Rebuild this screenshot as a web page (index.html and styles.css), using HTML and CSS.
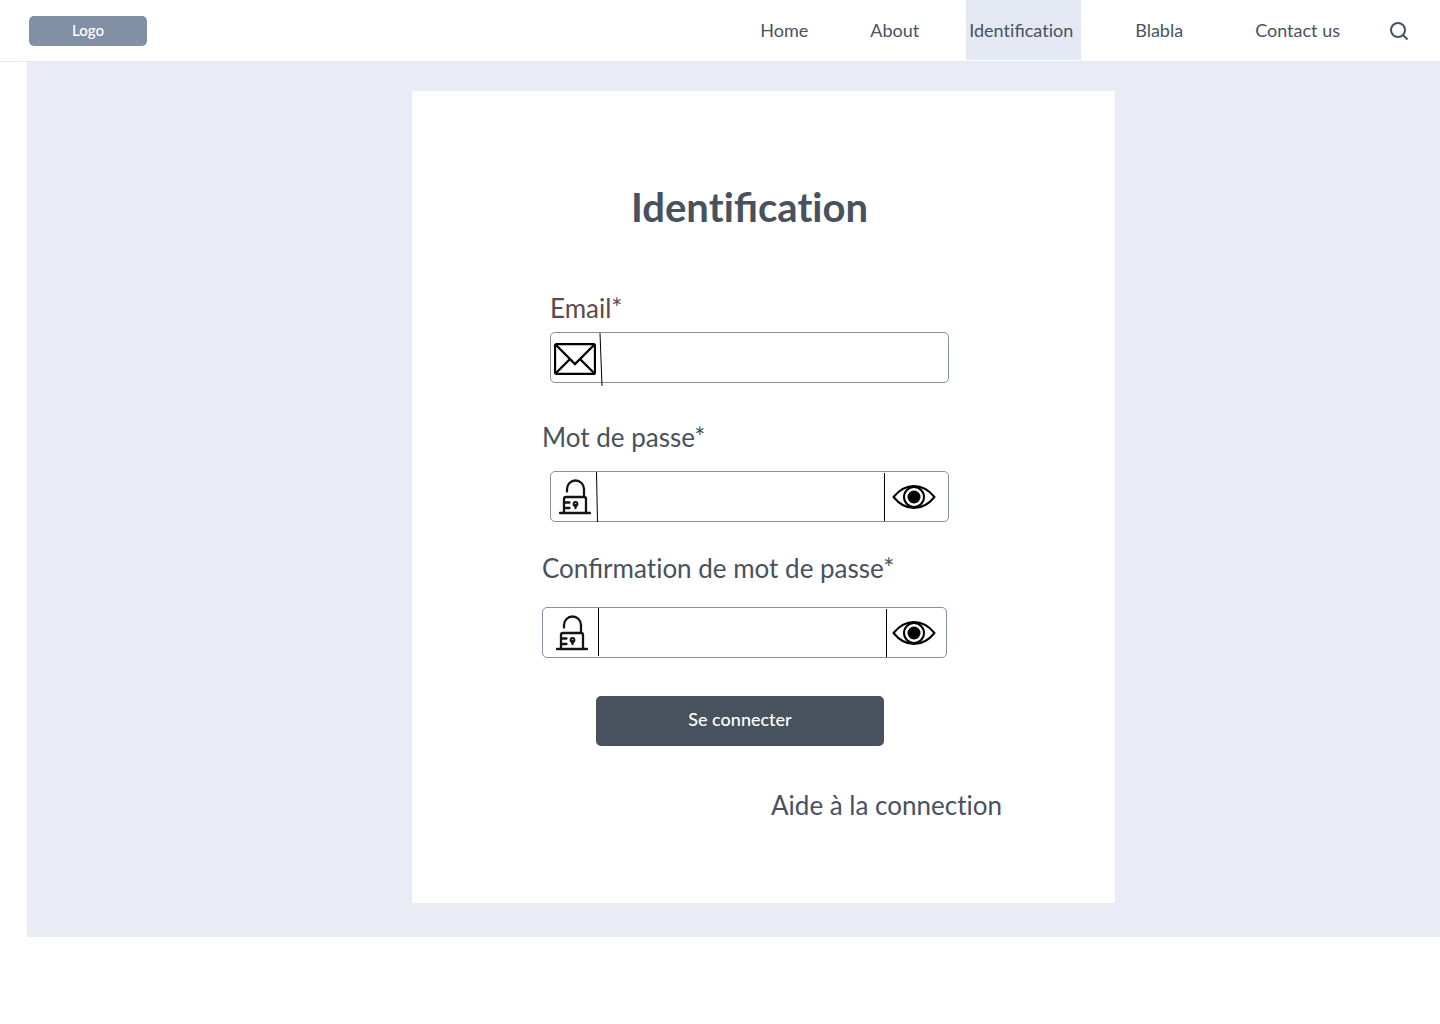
FILE: index.html
```html
<!DOCTYPE html>
<html lang="fr">
<head>
<meta charset="utf-8">
<meta name="viewport" content="width=device-width, initial-scale=1">
<title>Identification</title>
<link rel="stylesheet" href="styles.css">
</head>
<body>
<svg width="0" height="0" class="sprite" aria-hidden="true">
  <symbol id="lock" viewBox="0 0 34 36">
    <g fill="none" stroke="#151313" stroke-width="2.300" stroke-linecap="round" stroke-linejoin="round">
      <path d="M9 12.500V10a8 8 0 0 1 17 0v7"/>
      <path d="M6 33V20q0-2 2-2h18q2 0 2 2v13M2 34h30M7 23.500h4.500M7 29h4.500"/>
      <path d="M17.500 26v3"/>
      <circle cx="17.500" cy="25" r="1.900" stroke-width="2"/>
    </g>
  </symbol>
  <symbol id="eye" viewBox="0 0 44 26">
    <g fill="none" stroke="#000" stroke-width="2" stroke-linejoin="round">
      <path d="M1.500 13C8 5 14 2 22 2s14 3 20.500 11C36 21 30 24 22 24S8 21 1.500 13z"/>
      <circle cx="22" cy="13" r="10"/>
    </g>
    <circle cx="22" cy="13" r="6.500"/>
  </symbol>
</svg>
<header class="topbar">
  <a class="logo" href="#">Logo</a>
  <nav class="nav">
    <a class="nav-home" href="#">Home</a>
    <a class="nav-about" href="#">About</a>
    <a class="nav-current" href="#" aria-current="page">Iden<span class="plain">ti</span>fica<span class="plain">ti</span>on</a>
    <a class="nav-blabla" href="#">Blabla</a>
    <a class="nav-contact" href="#">Contact us</a>
  </nav>
  <button class="icon-button search" type="button" aria-label="Search">
    <svg width="20" height="20" viewBox="0 0 20 20" fill="none" stroke="#48525e" stroke-width="2"><circle cx="9" cy="9" r="7"/><path d="M14 14l4.500 4.500"/></svg>
  </button>
</header>
<main class="page">
  <section class="card">
    <h1 class="title">Iden<span class="plain">ti</span>fica<span class="plain">ti</span>on</h1>
    <form class="form">
      <label class="label label-email" for="email">Email*</label>
      <div class="field field-email">
        <svg class="mail" width="42" height="32" viewBox="0 0 42 32" fill="none" stroke="#000" stroke-width="2.300"><rect x="1" y="1" width="40" height="30" rx="2"/><path d="M2 2l19 19L40 2M2 30l14-14M40 30L26 16"/></svg>
        <svg class="divider" width="4" height="54" viewBox="0 0 4 54" stroke="#000"><path d="M1 0l2 53"/></svg>
        <input id="email" type="email">
      </div>
      <label class="label" for="password">Mot de passe*</label>
      <div class="field field-password">
        <svg class="lock" width="34" height="36"><use href="#lock"/></svg>
        <svg class="divider" width="2" height="50" viewBox="0 0 2 50" stroke="#000"><path d="M0.500 0l1 50"/></svg>
        <input id="password" type="password">
        <button class="icon-button reveal" type="button" aria-label="Afficher le mot de passe"><svg width="44" height="26"><use href="#eye"/></svg></button>
      </div>
      <label class="label" for="confirm">Confirma<span class="plain">ti</span>on de mot de passe*</label>
      <div class="field field-confirm">
        <svg class="lock" width="34" height="36"><use href="#lock"/></svg>
        <span class="divider rule"></span>
        <input id="confirm" type="password">
        <button class="icon-button reveal" type="button" aria-label="Afficher la confirmation"><svg width="44" height="26"><use href="#eye"/></svg></button>
      </div>
      <button class="submit" type="submit">Se connecter</button>
      <a class="help" href="#">Aide à la connec<span class="plain">ti</span>on</a>
    </form>
  </section>
</main>
</body>
</html>
```
FILE: styles.css
```css
* {
  box-sizing: border-box;
}

body {
  margin: 0;
  background: #fff;
  color: #48525e;
  font-family: Lato, "Liberation Sans", sans-serif;
}

a {
  color: inherit;
  text-decoration: none;
}

svg {
  display: block;
  flex: none;
}

/* Keeps the dot on the i after a t */
.plain {
  font-variant-ligatures: none;
}

.sprite {
  position: absolute;
}

.topbar {
  display: flex;
  align-items: center;
  min-height: 62px;
  padding: 0 31px 0 29px;
  border-bottom: 1px solid #e4e8f2;
}

.logo {
  width: 118px;
  border-radius: 5px;
  background: #8290a6;
  color: #fff;
  font-size: 15px;
  font-weight: 500;
  line-height: 28px;
  padding-bottom: 2px;
  text-align: center;
}

.nav {
  display: flex;
  margin-left: auto;
  padding-bottom: 1px;
  font-size: 18px;
  line-height: 60px;
}

.nav-about {
  margin-left: 62px;
}

.nav-current {
  width: 115px;
  margin-left: 47px;
  padding-left: 3px;
  background: #e4e8f2;
}

.nav-blabla {
  margin-left: 54px;
}

.nav-contact {
  margin-left: 72px;
}

.icon-button {
  border: 0;
  padding: 0;
  background: none;
  cursor: pointer;
}

.search {
  margin-left: 49px;
}

.page {
  display: flex;
  justify-content: center;
  margin-left: 27px;
  padding: 29px 0 34px 60px;
  background: #e9ecf5;
}

.card {
  width: 100%;
  max-width: 703px;
  padding: 92px 113px 82px 130px;
  background: #fff;
}

.title {
  margin: 0 45px 61px 0;
  font-size: 40px;
  font-weight: 700;
  line-height: 48px;
  text-align: center;
}

.form {
  display: flex;
  flex-direction: column;
  align-items: flex-start;
}

.label {
  font-size: 26px;
  line-height: 32px;
}

.label-email {
  margin-left: 8px;
  color: #5e484c;
}

.field {
  display: flex;
  align-items: center;
  width: 100%;
  height: 51px;
  border: 1px solid #8290a6;
  border-radius: 5px;
}

.field input {
  flex: 1;
  min-width: 0;
  height: 100%;
  border: 0;
  padding: 0 12px;
  background: none;
  color: inherit;
  font: inherit;
  font-size: 18px;
  outline: 0;
}

.divider {
  align-self: flex-start;
}

.rule {
  width: 1px;
  height: 48px;
  background: #000;
}

.field-email {
  max-width: 399px;
  margin: 8px 0 38px 8px;
}

.mail {
  margin: 2px 3px 0 3px;
}

.field-password {
  max-width: 399px;
  margin: 18px 0 30px 8px;
}

.lock {
  margin: 0 4px 0 7px;
}

.field-confirm {
  max-width: 405px;
  margin: 23px 0 38px;
}

.field-confirm .lock {
  margin: 0 9px 0 12px;
}

.reveal {
  height: 48px;
  padding: 0 12px 0 7px;
  border-left: 1px solid #000;
}

.field-confirm .reveal {
  padding: 0 10px 0 5px;
}

.submit {
  width: 288px;
  height: 50px;
  margin: 0 0 43px 54px;
  border: 0;
  border-radius: 5px;
  padding: 0 0 4px;
  background: #48525e;
  color: #fff;
  font: inherit;
  font-size: 18px;
  font-weight: 500;
  cursor: pointer;
}

.help {
  align-self: flex-end;
  font-size: 26px;
  line-height: 32px;
}
```
